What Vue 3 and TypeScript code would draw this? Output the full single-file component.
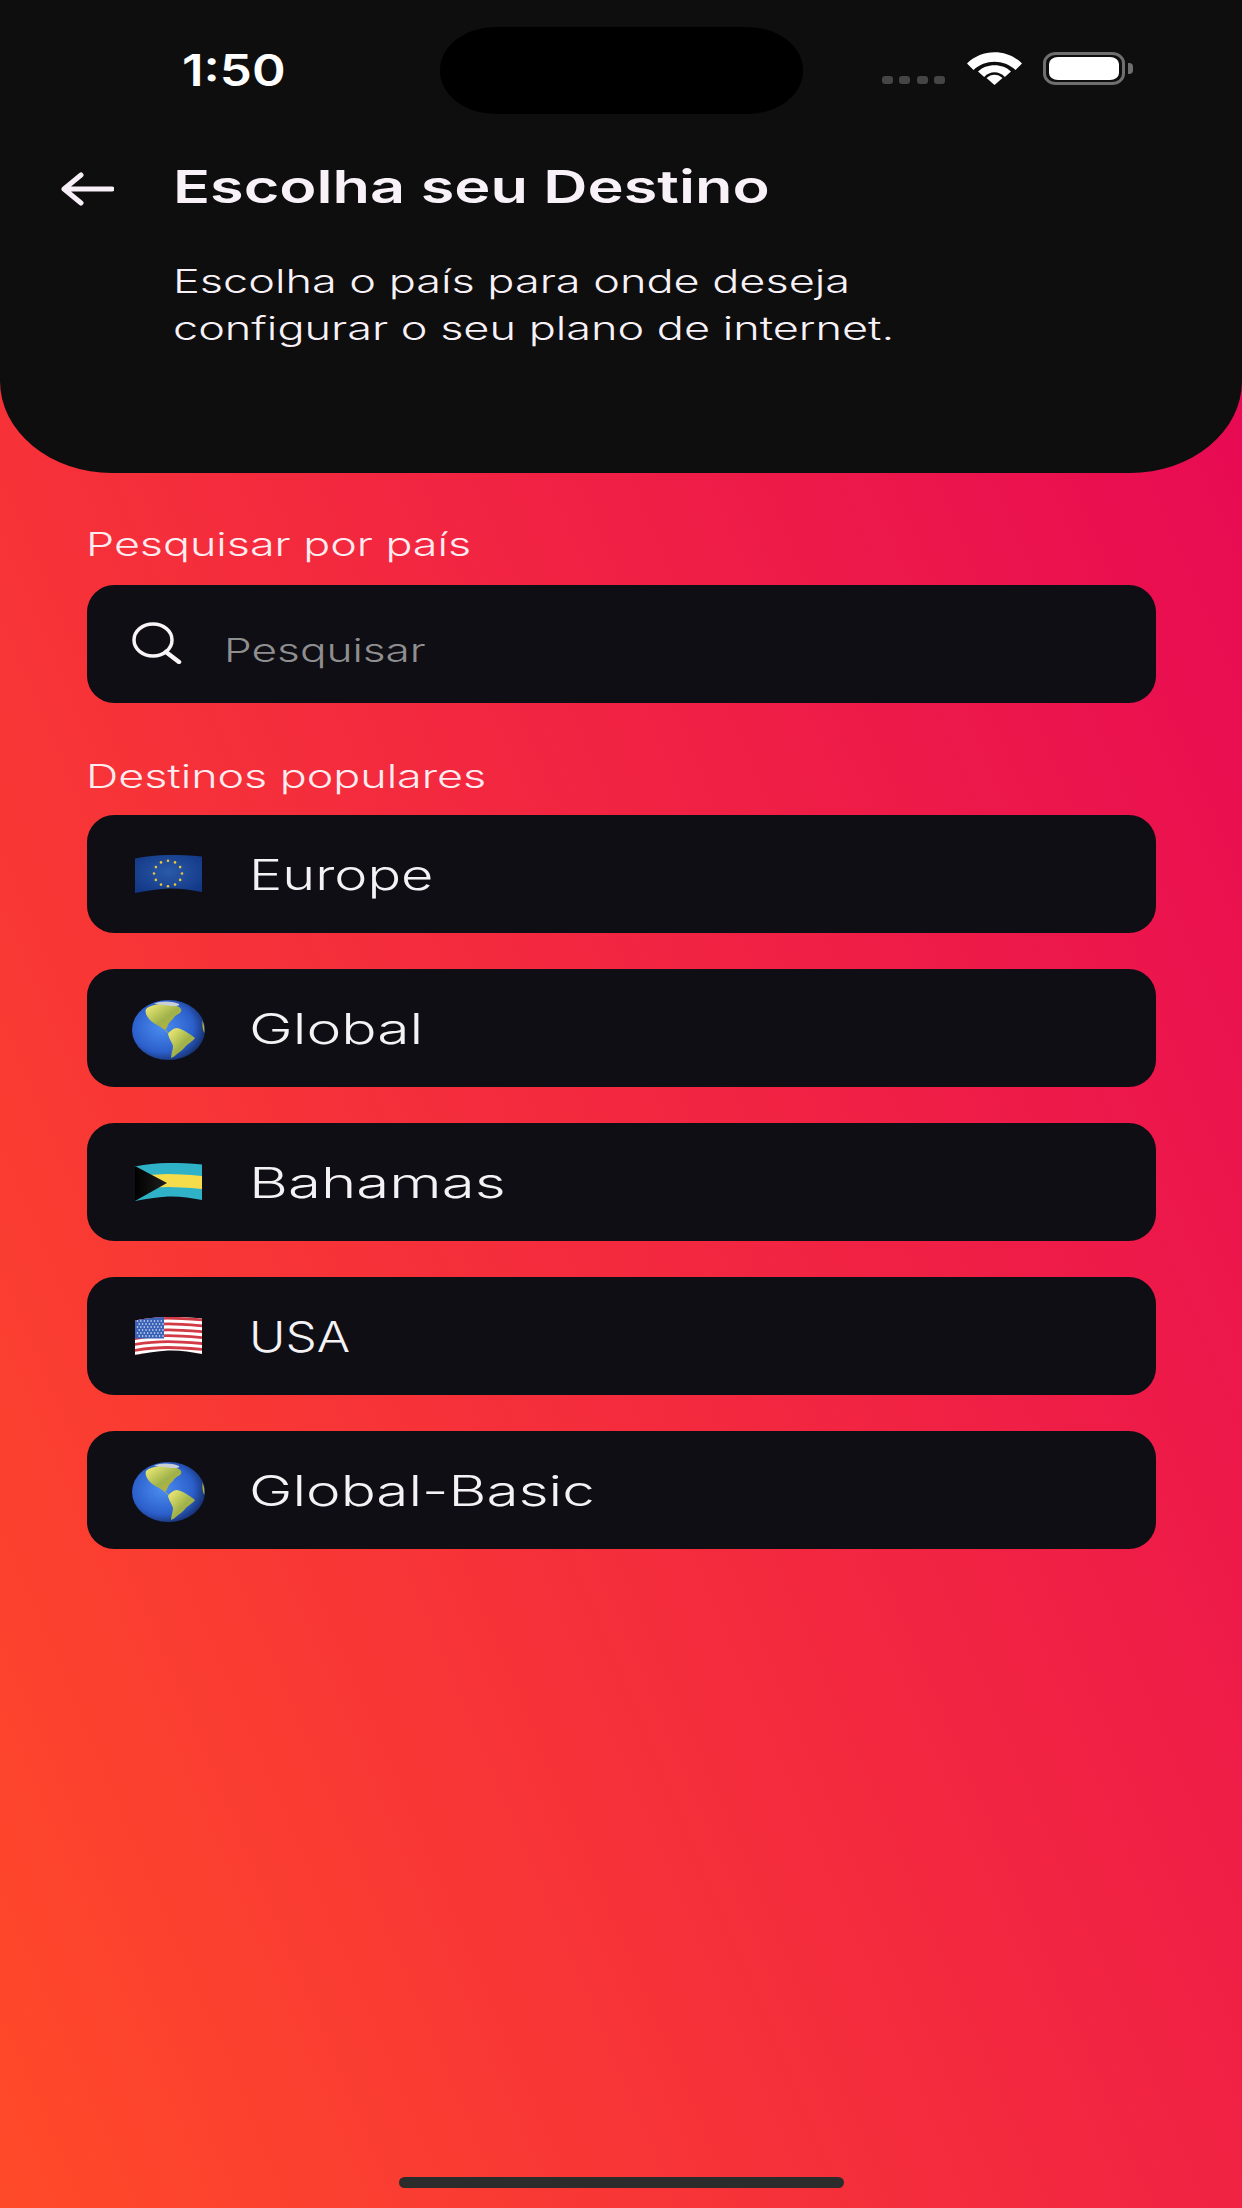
<template>
  <div class="screen">
    <svg class="defs" width="0" height="0" aria-hidden="true">
      <defs>
        <radialGradient id="ocean" cx="0.42" cy="0.45" r="0.6">
          <stop offset="0" stop-color="#4a8df0" />
          <stop offset="0.7" stop-color="#2c5fcb" />
          <stop offset="1" stop-color="#16306f" />
        </radialGradient>
        <linearGradient id="land" x1="0" y1="0" x2="1" y2="1">
          <stop offset="0" stop-color="#f6f07a" />
          <stop offset="0.55" stop-color="#9fb24a" />
          <stop offset="1" stop-color="#cdb035" />
        </linearGradient>
        <radialGradient id="euBlue" cx="0.5" cy="0.45" r="0.65">
          <stop offset="0" stop-color="#2a5aa8" />
          <stop offset="1" stop-color="#123785" />
        </radialGradient>
        <linearGradient id="hoist" x1="0" y1="0" x2="1" y2="0">
          <stop offset="0" stop-color="#000" />
          <stop offset="1" stop-color="#1f1f1f" />
        </linearGradient>
        <clipPath id="wave">
          <path d="M0 3.5C11 1.5 22 0 33 0S56 0 67 1.5V37C56 35 44 33 33 33.5S11 36 0 38Z" />
        </clipPath>
      </defs>
    </svg>

    <header class="header">
      <div class="status">
        <span class="time">1:50</span>
        <div class="island"></div>
        <div class="status-icons">
          <div class="signal"><i v-for="n in 4" :key="n"></i></div>
          <svg class="wifi" viewBox="0 0 55 33">
            <path d="M0 11.5C15-3.5 40-3.5 55 11.5L48.5 18C37 7 18 7 6.5 18Z" fill="#fff" />
            <path d="M11 22.5C19 14 36 14 44 22.5L37.8 28C32 21.8 23 21.8 17.2 28Z" fill="#fff" transform="translate(0 -3)" />
            <path d="M19.5 26C24 21.5 31 21.5 35.5 26L27.5 33Z" fill="#fff" />
          </svg>
          <div class="battery"><div class="battery-fill"></div></div>
          <div class="battery-nub"></div>
        </div>
      </div>
      <div class="title-row">
        <svg class="back" viewBox="0 0 54 34">
          <path d="M52 17H4M21 3L4 17L21 31" fill="none" stroke="#f7eff7" stroke-width="5" stroke-linecap="round" stroke-linejoin="round" />
        </svg>
        <h1 class="title">Escolha seu Destino</h1>
      </div>
      <p class="subtitle">
        <span>Escolha o país para onde deseja</span>
        <span>configurar o seu plano de internet.</span>
      </p>
    </header>

    <main class="content">
      <label class="label first">Pesquisar por país</label>
      <div class="box search">
        <svg class="search-icon" viewBox="0 0 50 42">
          <ellipse cx="21" cy="18" rx="19" ry="16" fill="none" stroke="#f8f4f8" stroke-width="3.5" />
          <path d="M34 30L47 40" stroke="#f8f4f8" stroke-width="4.5" stroke-linecap="round" />
        </svg>
        <span class="placeholder">Pesquisar</span>
      </div>

      <label class="label second">Destinos populares</label>
      <ul class="list">
        <li v-for="dest in destinations" :key="dest.name" class="box row">
          <div class="flag-slot">
            <svg v-if="dest.flag === 'eu'" class="flag" viewBox="0 0 67 38">
              <rect width="67" height="38" fill="url(#euBlue)" clip-path="url(#wave)" />
              <circle v-for="(s, i) in euStars" :key="i" :cx="s.x" :cy="s.y" r="1.3" fill="#e8c53a" />
            </svg>

            <svg v-else-if="dest.flag === 'globe'" class="globe" viewBox="0 0 73 60">
              <ellipse cx="36.5" cy="30" rx="36.5" ry="30" fill="url(#ocean)" />
              <path d="M14 9C17 6 22 5 27 4C34 3 42 4 47 7C50 9 50 11 48 13C45 15 42 16 41 19C39 21 37 22 36 25C35 27 34 29 33 30C30 28 28 26 25 25C21 23 17 20 15 16C14 14 13 11 14 9Z" fill="url(#land)" />
              <path d="M22 3.5C28 1 38 .5 47 4C48 6 44 6 40 6C35 5 28 5 22 3.5Z" fill="#c8ced8" />
              <path d="M33 30C34 31 35 32 37 33" fill="none" stroke="#a9b54a" stroke-width="1" />
              <path d="M36 34C38 31 42 28 45 28C50 29 57 33 63 38C60 42 55 44 53 47C51 50 47 52 45 54C43 56 41 57 39 58C39 54 41 50 41 46C40 42 37 39 36 34Z" fill="url(#land)" />
              <path d="M70.5 20Q73 26 72.5 33Q70 30 70.5 20Z" fill="#b9b03a" />
            </svg>

            <svg v-else-if="dest.flag === 'bs'" class="flag" viewBox="0 0 67 38">
              <g clip-path="url(#wave)">
                <rect width="67" height="38" fill="#2fb2c8" />
                <path :d="wavePath" transform="translate(0 19.5)" fill="none" stroke="#f6dc4a" stroke-width="13" />
                <path d="M0 3L32 20L0 38Z" fill="url(#hoist)" />
              </g>
            </svg>

            <svg v-else class="flag" viewBox="0 0 67 38">
              <g clip-path="url(#wave)">
                <rect width="67" height="38" fill="#fff" />
                <path
                  v-for="y in usStripes"
                  :key="y"
                  :d="wavePath"
                  :transform="`translate(0 ${y})`"
                  fill="none"
                  stroke="#d23a45"
                  stroke-width="2.8"
                />
                <rect x="0" y="0" width="29" height="21.5" fill="#3a62b8" />
                <circle v-for="(s, i) in usStars" :key="i" :cx="s.x" :cy="s.y" r=".8" fill="#eef2fb" />
              </g>
            </svg>
          </div>
          <span class="row-name" :style="{ transform: `scaleX(${dest.stretch})` }">{{ dest.name }}</span>
        </li>
      </ul>
    </main>

    <div class="home-bar"></div>
  </div>
</template>

<script setup lang="ts">
type FlagKind = 'eu' | 'globe' | 'bs' | 'us'

const destinations: { name: string; flag: FlagKind; stretch: number }[] = [
  { name: 'Europe', flag: 'eu', stretch: 1.33 },
  { name: 'Global', flag: 'globe', stretch: 1.4 },
  { name: 'Bahamas', flag: 'bs', stretch: 1.43 },
  { name: 'USA', flag: 'us', stretch: 1.18 },
  { name: 'Global-Basic', flag: 'globe', stretch: 1.39 },
]

const wavePath = 'M-1 1C11 -1 22 -2 33 -2S56 -1 68 0'

const euStars = Array.from({ length: 12 }, (_, i) => {
  const a = (i * Math.PI) / 6
  return { x: 33 + 14 * Math.sin(a), y: 18.5 - 12.8 * Math.cos(a) }
})

const usStripes = [3, 8.9, 14.8, 20.7, 26.6, 32.5, 38.4]

const usStars: { x: number; y: number }[] = []
for (let r = 0; r < 6; r++) {
  for (let c = 0; c < 8; c++) {
    usStars.push({ x: 2.5 + c * 3.4 + (r % 2) * 1.7, y: 4 + r * 3 })
  }
}
</script>

<style>
html,
body {
  margin: 0;
  padding: 0;
}
</style>

<style scoped>
.screen {
  width: 1242px;
  height: 2208px;
  display: flex;
  flex-direction: column;
  overflow: hidden;
  position: relative;
  background: linear-gradient(67deg, #ff4a28 0%, #e80b53 91%);
  font-family: Inter, 'Liberation Sans', sans-serif;
}

.defs {
  position: absolute;
}

.header {
  height: 473px;
  flex: none;
  background: #0e0e0e;
  border-radius: 0 0 112px 112px / 0 0 92px 92px;
  color: #f8f2f8;
}

.status {
  display: flex;
  align-items: center;
  padding: 27px 0 0 182px;
  height: 87px;
}

.time {
  width: 258px;
  font-size: 44px;
  line-height: 50px;
  margin-top: -2px;
  font-weight: 600;
  color: #fff;
  display: inline-block;
  transform: scaleX(1.16);
  transform-origin: left;
}

.island {
  width: 363px;
  height: 87px;
  background: #000;
  border-radius: 56px / 43px;
}

.status-icons {
  margin-left: 79px;
  display: flex;
  align-items: flex-start;
  height: 87px;
  position: relative;
}

.signal {
  display: flex;
  gap: 6.3px;
  margin-top: 49px;
}

.signal i {
  width: 11px;
  height: 8px;
  border-radius: 3px;
  background: #454545;
}

.wifi {
  width: 55px;
  height: 33px;
  margin: 25px 0 0 22px;
}

.battery {
  box-sizing: border-box;
  width: 82px;
  height: 33px;
  margin: 25px 0 0 21px;
  border: 3px solid #6f6f6f;
  border-radius: 13px / 11px;
  padding: 2px 3px;
}

.battery-fill {
  height: 100%;
  background: #fff;
  border-radius: 9px / 7px;
}

.battery-nub {
  width: 5px;
  height: 11px;
  margin: 36px 0 0 3px;
  background: #6f6f6f;
  border-radius: 0 4px 4px 0;
}

.title-row {
  display: flex;
  align-items: center;
  padding-left: 60px;
  margin-top: 43px;
  height: 60px;
}

.back {
  width: 54px;
  height: 34px;
  flex: none;
  margin-top: 4px;
  margin-right: 59px;
}

.title {
  margin: 0;
  font-size: 45px;
  font-weight: 600;
  line-height: 60px;
  white-space: nowrap;
  transform: scaleX(1.36);
  transform-origin: left;
}

.subtitle {
  margin: 41px 0 0 173px;
  font-size: 32px;
  font-weight: 300;
  line-height: 47px;
  transform: scaleX(1.407);
  transform-origin: left;
}

.subtitle span {
  display: block;
  white-space: nowrap;
}

.content {
  padding: 0 86px 0 87px;
  flex: 1;
}

.label {
  display: block;
  margin-left: -1px;
  font-size: 32px;
  font-weight: 300;
  line-height: 40px;
  color: #ffecf0;
  transform: scaleX(1.4);
  transform-origin: left;
  white-space: nowrap;
}

.label.first {
  margin-top: 52px;
}

.label.second {
  margin-top: 54px;
  margin-bottom: 18px;
}

.box {
  height: 118px;
  box-sizing: border-box;
  background: #0e0e14;
  border-radius: 27px;
  display: flex;
  align-items: center;
}

.search {
  margin-top: 20px;
  padding-left: 45px;
}

.search-icon {
  width: 50px;
  height: 42px;
  margin-top: -2px;
  flex: none;
}

.placeholder {
  margin-left: 42px;
  margin-top: 12px;
  font-size: 32px;
  font-weight: 300;
  color: #8f8f8f;
  display: inline-block;
  transform: scaleX(1.38);
  transform-origin: left;
}

.list {
  list-style: none;
  margin: 0;
  padding: 0;
  display: flex;
  flex-direction: column;
  gap: 36px;
}

.row {
  padding-left: 45px;
}

.flag-slot {
  width: 73px;
  flex: none;
  display: flex;
  justify-content: center;
}

.flag {
  width: 67px;
  height: 38px;
  display: block;
}

.globe {
  width: 73px;
  height: 60px;
  display: block;
  margin-top: 3px;
}

.row-name {
  margin-left: 44px;
  font-size: 42px;
  font-weight: 300;
  color: #f5f2f5;
  display: inline-block;
  white-space: nowrap;
  transform-origin: left;
}

.home-bar {
  width: 445px;
  height: 11px;
  margin: 0 auto 20px;
  flex: none;
  border-radius: 6px;
  background: #2c2c2c;
}
</style>
